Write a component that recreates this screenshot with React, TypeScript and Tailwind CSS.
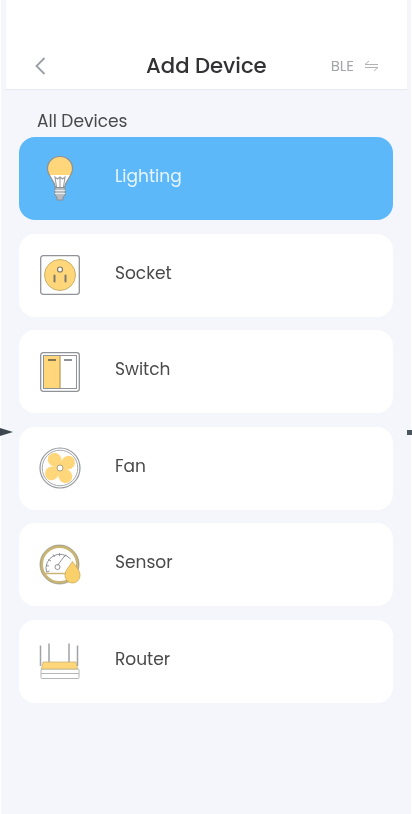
const Bulb = () => (
  <svg width="28" height="47" viewBox="0 0 28 47" fill="none">
    <path d="M14 1.500C6.500 1.500 1.500 7 1.500 13.500c0 2.500.5 4.500 1.500 6.500h22c1-2 1.500-4 1.500-6.500C26.500 7 21.500 1.500 14 1.500Z" fill="#ffd67a" />
    <path d="M3 20c1.800 3.500 5 7 6.300 12h9.400c1.300-5 4.500-8.500 6.300-12Z" fill="#fff" />
    <path d="M14 1.500C6.500 1.500 1.500 7 1.500 13.500c0 8 6.800 11 8 19h9c1.200-8 8-11 8-19C26.500 7 21.500 1.500 14 1.500Z" stroke="#8a8f94" strokeWidth="1.200" />
    <path d="M10.500 32 9 22l2.500 2 2.500-2 2.500 2 2.500-2-1.500 10M14 22v10" stroke="#9a9ea3" strokeWidth="1.100" />
    <path d="M9 32.500h10v8l-2 1.500v3h-6v-3l-2-1.500Z" fill="#b9bcc0" stroke="#8a8f94" strokeWidth="1" />
    <path d="M9 35.500h10M9 38.500h10" stroke="#eceded" strokeWidth="1" />
  </svg>
);
const Socket = () => (
  <svg width="40" height="40" viewBox="0 0 40 40" fill="none">
    <rect x=".7" y=".7" width="38.600" height="38.600" rx="2.500" fill="#fff" stroke="#8f9296" strokeWidth="1.300" />
    <circle cx="20" cy="20" r="15.500" fill="#ffd67a" stroke="#c9b26f" strokeWidth="1" />
    <circle cx="20" cy="14.500" r="2.500" fill="#fff" stroke="#7d7a6c" strokeWidth="1.200" />
    <path d="M14.500 20.500v6M25.500 20.500v6" stroke="#7d7a6c" strokeWidth="2" strokeLinecap="round" />
  </svg>
);
const SwitchIcon = () => (
  <svg width="40" height="40" viewBox="0 0 40 40" fill="none">
    <rect x=".7" y=".7" width="38.600" height="38.600" rx="2.500" fill="#fff" stroke="#8f9296" strokeWidth="1.300" />
    <rect x="3.500" y="3.500" width="33" height="33" fill="#fff" stroke="#8f9296" strokeWidth="1" />
    <rect x="4" y="4" width="16" height="32" fill="#ffd67a" />
    <path d="M20 4v32" stroke="#b39c56" strokeWidth="1.200" />
    <path d="M8 8h8" stroke="#857650" strokeWidth="2" />
    <path d="M24 8h8" stroke="#8f9296" strokeWidth="2" />
  </svg>
);
const blade = "M21 20C14 17 12.500 8 18 5 24 2.500 30 8 27.500 14 26 17.500 24 19 21 20Z";
const Fan = () => (
  <svg width="42" height="42" viewBox="0 0 42 42" fill="none">
    <circle cx="21" cy="21" r="20" fill="#fff" stroke="#94979b" strokeWidth="1.200" />
    <circle cx="21" cy="21" r="17.800" stroke="#a6a9ac" strokeWidth="1" />
    <path d={blade} fill="#ffd67a" transform="rotate(-35 21 21)" />
    <path d={blade} fill="#ffd67a" transform="rotate(55 21 21)" />
    <path d={blade} fill="#ffd67a" transform="rotate(145 21 21)" />
    <path d={blade} fill="#ffd67a" transform="rotate(235 21 21)" />
    <circle cx="21" cy="21" r="3" fill="#fff" stroke="#a9a283" strokeWidth="1" />
  </svg>
);
const Sensor = () => (
  <svg width="42" height="42" viewBox="0 0 42 42" fill="none">
    <circle cx="20.500" cy="20.500" r="18" fill="#fff" stroke="#c9b677" strokeWidth="3" />
    <circle cx="20.500" cy="20.500" r="19.500" stroke="#8f8d80" strokeWidth=".7" />
    <path d="M7.500 28a14 14 0 0 1 24-13" stroke="#8f9296" strokeWidth="1" />
    <path d="M7.500 28l3-1M7 21.500l3 .5M9.500 15.500l2.500 1.500M14 10.500l1.500 2.500M20.500 9v3M27 10.500 25.500 13" stroke="#8f9296" strokeWidth="1" />
    <path d="M18.500 21.500 25.500 12" stroke="#8f9296" strokeWidth="1" />
    <circle cx="18.500" cy="23" r="2.500" stroke="#8f9296" strokeWidth="1" />
    <path d="M4 29.500h24" stroke="#c9b677" strokeWidth="1.500" />
    <path d="M33.500 17.500c-3 5-7.500 8.500-7.500 14a7.500 7.500 0 0 0 15 0c0-5.500-4.500-9-7.500-14Z" fill="#fad06b" stroke="#c9a857" strokeWidth=".8" />
  </svg>
);
const Router = () => (
  <svg width="42" height="36" viewBox="0 0 42 36" fill="none">
    <path d="M1.500 2.500V23M10 .500V19M30 .500V19M38.500 2.500V23" stroke="#a0a3a6" strokeWidth="1.500" />
    <rect x="2" y="26" width="38" height="9.500" rx="1" fill="#fff" stroke="#b4b6b9" strokeWidth="1" />
    <path d="M2 30.500h38" stroke="#b4b6b9" strokeWidth="1" />
    <path d="M4 19h33l1.500 7H2.500Z" fill="#ffd67a" stroke="#c6b277" strokeWidth=".8" />
  </svg>
);

const devices = [
  { name: "Socket", icon: <Socket /> },
  { name: "Switch", icon: <SwitchIcon /> },
  { name: "Fan", icon: <Fan /> },
  { name: "Sensor", icon: <Sensor /> },
  { name: "Router", icon: <Router /> },
];

export default function App() {
  return (
    <div className="relative h-[814px] w-[412px] overflow-hidden bg-white pl-px pr-px blur-[0.4px] font-['Poppins','Inter','Liberation_Sans',sans-serif]">
      <div className="h-full bg-[#f4f6fb]">
        <header className="ml-[5px] mr-1 flex h-[89px] items-end bg-white pb-[7px] shadow-[0_1px_1px_rgba(225,230,240,0.7)]">
          <div className="flex h-[32px] w-full items-center pl-[28px] pr-[28px]">
            <svg width="12" height="20" viewBox="0 0 12 20" fill="none">
              <path d="M10.500 2 2.500 10l8 8" stroke="#9a9fa5" strokeWidth="1.800" />
            </svg>
            <h1 className="ml-[100px] text-[21.200px] leading-8 font-medium text-[#323234]">Add Device</h1>
            <span className="ml-auto text-[15px] leading-5 text-[#a3a5a8]">BLE</span>
            <svg className="ml-[10px]" width="15" height="12" viewBox="0 0 15 12" fill="none">
              <path d="M14 4.500H1L5 1M1 7.500h13L10 11" stroke="#b0b2b5" strokeWidth="1" />
            </svg>
          </div>
        </header>
        <div className="px-[18px]">
          <div className="pl-[18px] pt-[20px] pb-[4px] text-[17px] leading-6 text-[#4a4a4c]">All Devices</div>
          <div className="flex flex-col gap-[13.500px]">
            <div className="flex h-[83px] items-center rounded-[16px] bg-[#5cb8f8]">
              <div className="flex w-[96px] justify-center pr-[15px]"><Bulb /></div>
              <span className="pb-[3px] text-[17px] text-[#eaf6ff]">Lighting</span>
            </div>
            {devices.map((d) => (
              <div key={d.name} className="flex h-[83px] items-center rounded-[16px] bg-white">
                <div className="flex w-[96px] justify-center pr-[15px]">{d.icon}</div>
                <span className="pb-[3px] text-[17px] text-[#4a4a4c]">{d.name}</span>
              </div>
            ))}
          </div>
        </div>
      </div>
      <div className="absolute left-0 top-[428px] h-0 w-0 border-y-[4px] border-l-[13px] border-y-transparent border-l-[#3c4750]" />
      <div className="absolute right-0 top-[430px] h-[5px] w-[5px] bg-[#4b555d]" />
    </div>
  );
}
